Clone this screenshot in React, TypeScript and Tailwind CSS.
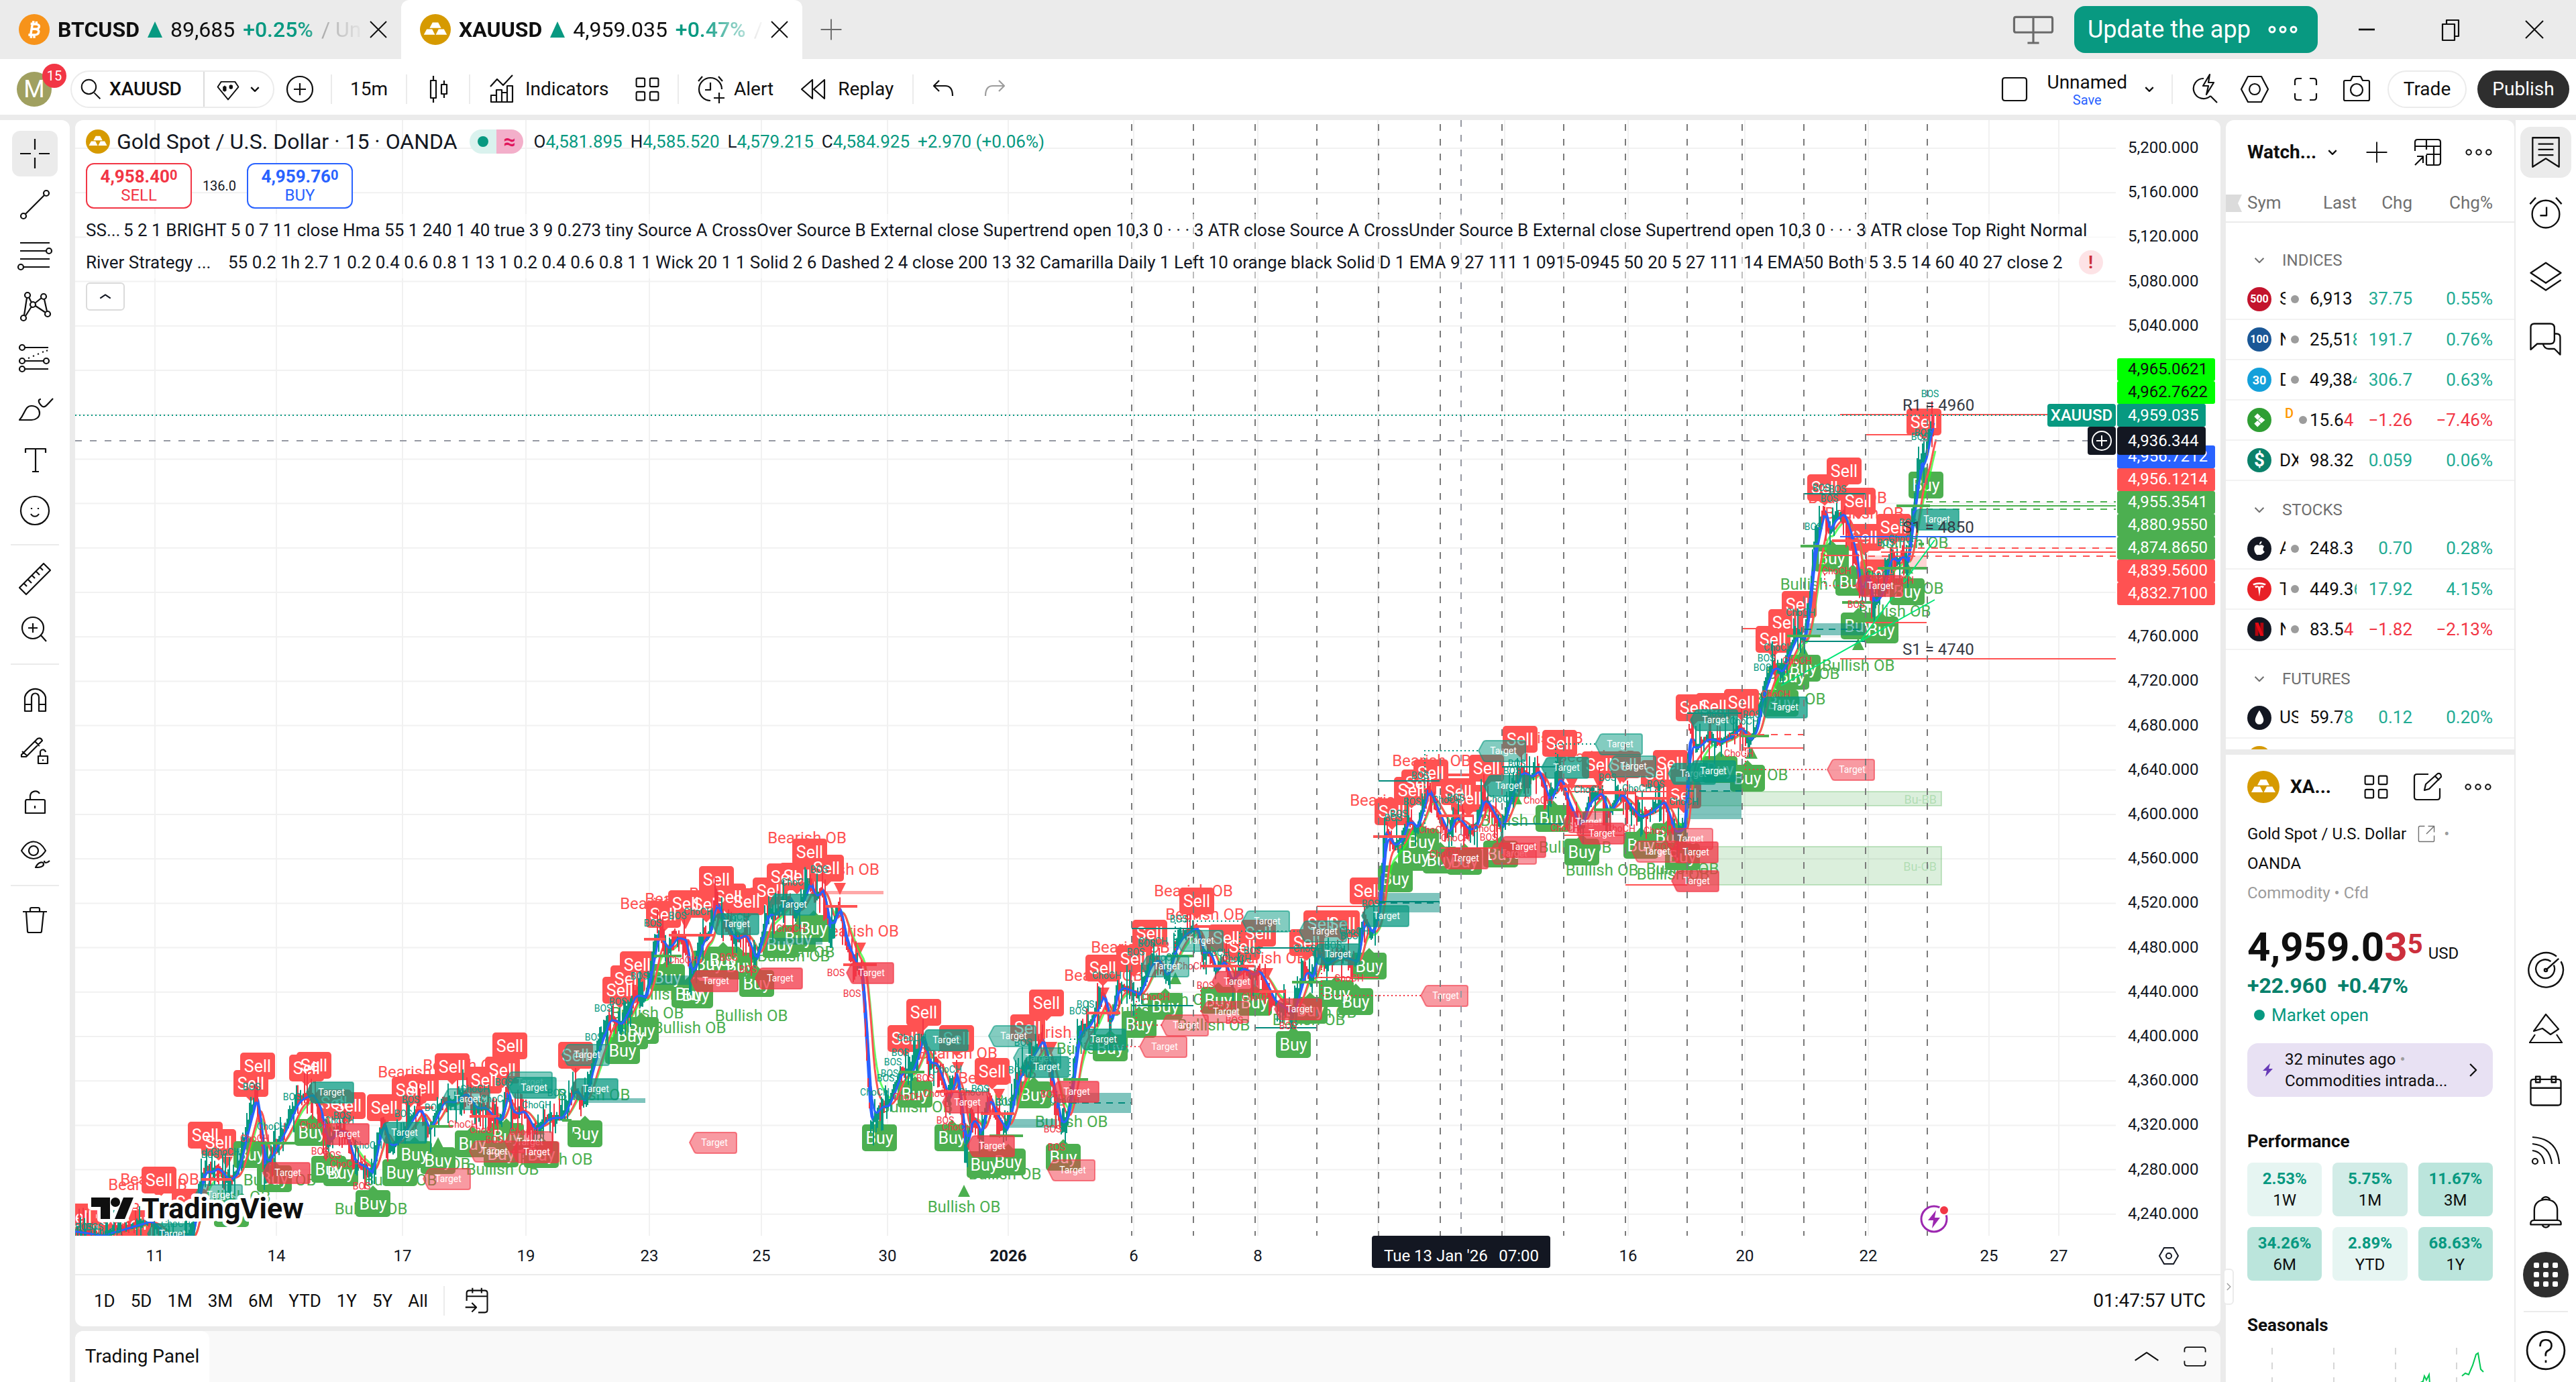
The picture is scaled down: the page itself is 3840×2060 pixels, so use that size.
import { FC, ReactNode } from 'react';

type Point = [number, number];

/* ---------- icons, drawn on a 28 unit grid ---------- */

const paths = {
	cross: 'M14 3v8M14 17v8M3 14h8M17 14h8',
	trend:
		'M7 21L21 7M5.5 20.5a2 2 0 1 0 0 4a2 2 0 1 0 0-4M22.5 3.5a2 2 0 1 0 0 4a2 2 0 1 0 0-4',
	fib: 'M3 4.5h22M3 10.5h19.5M3 16.5h22M5.5 22.5H25M24.5 8.5a2 2 0 1 0 0 4a2 2 0 1 0 0-4M3.5 20.5a2 2 0 1 0 0 4a2 2 0 1 0 0-4',
	pattern:
		'M6 20.5l2-13M7 21l4.500-7M9.500 7l2 4M14 11.500l5-4M14.500 13.500l7.500 5M21 8.500l2 9M5.500 20.500a2 2 0 1 0 0 4a2 2 0 1 0 0-4M8.500 3.500a2 2 0 1 0 0 4a2 2 0 1 0 0-4M12.500 10.500a2 2 0 1 0 0 4a2 2 0 1 0 0-4M20.500 4.500a2 2 0 1 0 0 4a2 2 0 1 0 0-4M23.500 17.500a2 2 0 1 0 0 4a2 2 0 1 0 0-4',
	forecast:
		'M6.500 6.500H24M6.500 16.500h14M6.500 22.500H24M9 14.500l1-.4M12.500 13l1-.4M16 11.500l1-.4M19.500 10l1-.4M22.500 9l1-.4M4.500 4.500a2 2 0 1 0 0 4a2 2 0 1 0 0-4M4.500 14.500a2 2 0 1 0 0 4a2 2 0 1 0 0-4M4.500 20.500a2 2 0 1 0 0 4a2 2 0 1 0 0-4M22.500 14.500a2 2 0 1 0 0 4a2 2 0 1 0 0-4',
	brush:
		'M2.500 22.500h9c3 0 6-2 6-5s-2-5.500-6-5.500c-5 0-4.500 5.500-9 10.500zM18.500 7c-2 0-2.500 2 .5 5c2 2 3.500 0 8.500-5.500',
	text: 'M7 9V6h15v3M14.500 6v17M12 23h5',
	emoji:
		'M14 3.500a10.500 10.500 0 1 0 0 21a10.500 10.500 0 1 0 0-21M11 16.500c1.500 2.500 4.500 2.500 6 0M11.500 12v1M16.500 12v1',
	ruler:
		'M2.500 20.500L20.500 2.500l5 5L7.500 25.500zM6 17.500l2 2M9 14.500l2.500 2.500M12 11.500l2 2M15 8.500l2.500 2.500M18 5.500l2 2',
	zoom: 'M12.500 4.500a8 8 0 1 0 0 16a8 8 0 1 0 0-16M18.500 18l4 4.500M9 12.500h7M12.500 9v7',
	magnet:
		'M6.500 23.500V13a8 8 0 0 1 15.500 0v10.500h-5V13a2.700 2.700 0 0 0-5.500 0v10.500zM6.500 18.500h5M17 18.500h5',
	penLock:
		'M4 18l12-12q2.500-1 3.500 1.500L7.500 19.500H4zM14 8l3.500 3.500M4.500 15.500l4 3.500M16.500 19h7v5.500h-7zM18 19v-2.500a2 2 0 0 1 4-.5M20 21.500v1',
	lock: 'M7.500 13.500h13a1 1 0 0 1 1 1v9h-14.500v-9zM10.500 13.500v-3a3.800 3.800 0 0 1 7-1.500M14 18v2',
	eye: 'M4 13.500c5-9 13-9 18 0c-5 8-13 8-18 0zM13 10a3.500 3.500 0 1 0 0 7a3.500 3.500 0 1 0 0-7M14.500 26c3 0 6-.5 6-2.500s-4-2-6 2.500zM21 21c0 2 2 2 4 0',
	trash: 'M5 8h18M7.500 8l1 14.500q0 1 1 1h8.500q1 0 1-1L20.500 8M10.500 8V6q0-1 1-1h5q1 0 1 1v2',
	search: 'M12 6a6 6 0 1 0 0 12a6 6 0 1 0 0-12M16.500 17l5 5',
	diamond: 'M8 7.500h12l3 4.500-9 11-9-11zM11 11v5M10 12h2v3h-2zM16.500 10v4M15.500 11h2v2h-2z',
	down: 'M9 11.500l5 5 5-5',
	up: 'M5 17l9-6 9 6',
	right: 'M11 7l7 7-7 7',
	plusCircle: 'M14 4.500a9.500 9.500 0 1 0 0 19a9.500 9.500 0 1 0 0-19M14 9.500v9M9.500 14h9',
	plus: 'M14 5v18M5 14h18',
	close: 'M7 7l14 14M21 7L7 21',
	candles: 'M8.500 7.500h4v13h-4zM10.500 4v3.500M10.500 20.500V24M16.500 10.500h4v7h-4zM18.500 7.500v3M18.500 17.500v3',
	indicators:
		'M5.500 23.500v-5h4v5zM9.500 23.500v-9h4v9zM13.500 23.500v-7h4v7zM17.500 23.500v-12h4v12zM5 12l5-5.500 4.500 4.500 7-7.500',
	grid: 'M6.500 5.500h4.500a1 1 0 0 1 1 1v4.500a1 1 0 0 1-1 1H6.500a1 1 0 0 1-1-1V6.500a1 1 0 0 1 1-1zM17 5.500h4.500a1 1 0 0 1 1 1v4.500a1 1 0 0 1-1 1H17a1 1 0 0 1-1-1V6.500a1 1 0 0 1 1-1zM6.500 16h4.500a1 1 0 0 1 1 1v4.500a1 1 0 0 1-1 1H6.500a1 1 0 0 1-1-1V17a1 1 0 0 1 1-1zM17 16h4.500a1 1 0 0 1 1 1v4.500a1 1 0 0 1-1 1H17a1 1 0 0 1-1-1V17a1 1 0 0 1 1-1z',
	alert:
		'M13.500 22.500a8.500 8.500 0 1 1 8.500-8.500M13.500 9v5.500h-4M4.500 8l3-3.500M22.500 8l-3-3.500M20 16.500v8M16 20.500h8',
	replay: 'M13 7v14l-8-7zM22 7v14l-8-7z',
	undo: 'M10.500 7.500l-4 4 4 4M6.500 11.500H15q5.500 0 5.500 7.500',
	redo: 'M17.500 7.500l4 4-4 4M21.500 11.500H13q-5.500 0-5.500 7.500',
	square: 'M7 5.500h14q2 0 2 2v13q0 2-2 2H7q-2 0-2-2v-13q0-2 2-2z',
	quick: 'M14 6a7.500 7.500 0 1 0 5 13M19 19l5 5M18.500 3l-5 8.500h4l-1.500 6.500 5.500-9h-4z',
	hex: 'M9 4.500h10l5 9.500-5 9.500H9L4 14zM14 10a4 4 0 1 0 0 8a4 4 0 1 0 0-8',
	full: 'M6 11V8q0-2 2-2h3M17 6h3q2 0 2 2v3M22 17v3q0 2-2 2h-3M11 22H8q-2 0-2-2v-3',
	camera:
		'M5.500 7.500h4l1.500-3h6l1.500 3h4q1 0 1 1v13q0 1-1 1h-17q-1 0-1-1v-13q0-1 1-1zM14 10a4.500 4.500 0 1 0 0 9a4.500 4.500 0 1 0 0-9',
	table:
		'M4.500 13V6.500q0-2 2-2h15q2 0 2 2v15q0 2-2 2H13M4.500 9.500h19M13 4.500V12M13 16v7.500M18.500 9.500v14M13 15.500h10.500M4.500 23.500l6-6M6 17h4.500v5',
	dots: 'M6 12a2 2 0 1 0 0 4a2 2 0 1 0 0-4M14 12a2 2 0 1 0 0 4a2 2 0 1 0 0-4M22 12a2 2 0 1 0 0 4a2 2 0 1 0 0-4',
	edit: 'M15 4.500H6.500q-2 0-2 2v15q0 2 2 2h15q2 0 2-2V15M12 16.500l1-4.500 9-8q2.500-.5 2.500 2.500l-9 9zM20 6l3 3',
	external: 'M12 5H6.500q-1.500 0-1.500 1.500v15q0 1.500 1.500 1.500h15q1.500 0 1.500-1.500V16M16 5h7v7M23 5l-9 9',
	list: 'M4.500 3.500h19v21L14 18.500l-9.500 6zM8.500 8h11M8.500 12h11M8.500 16h11',
	alarm:
		'M14 5.500a9.500 9.500 0 1 0 0 19a9.500 9.500 0 1 0 0-19M14.500 10v6H10M3 8l4-4.500M25 8l-4-4.500',
	layers: 'M14 5l10.500 7L14 19 3.500 12zM3.500 17L14 24l10.500-7',
	chat: 'M6 3.500h11q3 0 3 3v8q0 3-3 3H8l-4.500 4V6q0-2.500 2.500-2.500zM20 10.500h1.500q2.500 0 2.500 2.500v12l-4-4h-4q-3 0-4-3.500',
	radar:
		'M24.500 8a12 12 0 1 1-3-3.500M19.500 10.500a6.500 6.500 0 1 1-2-2.500M14 14l9-8M14 13a1 1 0 1 0 0 2a1 1 0 1 0 0-2',
	signal: 'M1.500 23.500h25M2 23.500l4-6M26 23.500l-4-6M14 2.500l9.500 11-6 4-6-4.500-6.500 2z',
	calendar: 'M5.500 6.500h17q2 0 2 2v14q0 2-2 2h-17q-2 0-2-2v-14q0-2 2-2zM3.500 12.500h21M7 4.500h3v4H7zM18 4.500h3v4h-3z',
	rss: 'M6 20a2 2 0 1 0 0 4a2 2 0 1 0 0-4M4 14q8 1 9 10M4 9q13 1 14.500 15M4 4q19 1 20 20',
	bell: 'M6 20.500v-7q0-7 8-7.500q8 .5 8 7.500v7M6 20.500h16q3 0 2.500 3h-21q-.5-3 2.500-3zM11 6q3-3.500 6 0M11.500 24q2.500 3 5 0',
	help: 'M14 2.500a11.500 11.500 0 1 0 0 23a11.500 11.500 0 1 0 0-23M10.500 11.500q0-4 3.500-4t3.500 3.500q0 2-2 3t-1.500 3.500M14 20v1.500',
	goto: 'M5 14V8q0-2 2-2h12q2 0 2 2v13q0 2-2 2h-5M5 10.500h16M9.500 4v4M16.500 4v4M4 19h8M9 15.500l3.500 3.500L9 22.500',
	expand: 'M4.500 10V8q0-2.500 2.500-2.500h14q2.500 0 2.500 2.500v2M4.500 18v2q0 2.500 2.500 2.500h14q2.500 0 2.500-2.500v-2',
	layout: 'M5 7.500h18q1 0 1 1v6q0 1-1 1H5q-1 0-1-1v-6q0-1 1-1zM14 7.500v13.500M11 21h6',
	restore: 'M8 10h9v12H8zM11 10V7h9v12h-3',
	minus: 'M7 14h14',
};

const Icon: FC<{ name: keyof typeof paths; className?: string }> = ({
	name,
	className = 'size-14',
}) => (
	<svg
		viewBox="0 0 28 28"
		className={`shrink-0 ${className}`}
		fill="none"
		stroke="currentColor"
		strokeWidth="1.1"
		strokeLinejoin="round"
		aria-hidden="true"
	>
		<path d={paths[name]} />
	</svg>
);

const IconButton: FC<{
	name: keyof typeof paths;
	label: string;
	className?: string;
	icon?: string;
}> = ({ name, label, className = '', icon }) => (
	<button
		type="button"
		aria-label={label}
		className={`flex shrink-0 items-center justify-center ${className}`}
	>
		<Icon name={name} className={icon} />
	</button>
);

const GoldLogo: FC<{ className: string }> = ({ className }) => (
	<svg viewBox="0 0 24 24" className={`shrink-0 ${className}`} aria-hidden="true">
		<circle cx="12" cy="12" r="12" fill="#d69a00" />
		<path
			fill="#fff"
			d="M9.800 6.500h4.400l2.300 4.300h-9zM5.300 11.700h4.200l2.200 4.300H3zM14.500 11.700h4.200L21 16h-8.700z"
		/>
	</svg>
);

/* ---------- chart data ---------- */

const price: Point[] = [
	[112, 1836], [150, 1842], [224, 1820], [245, 1842], [287, 1842], [295, 1776], [306, 1738],
	[314, 1748], [324, 1740], [340, 1762], [353, 1748], [369, 1677], [382, 1628], [388, 1683],
	[394, 1748], [407, 1716], [427, 1677], [444, 1639], [465, 1631], [477, 1655], [487, 1710],
	[502, 1683], [515, 1688], [527, 1735], [544, 1740], [554, 1751], [564, 1694], [571, 1666],
	[581, 1716], [597, 1694], [614, 1666], [625, 1650], [639, 1688], [660, 1639], [676, 1644],
	[693, 1628], [709, 1655], [722, 1650], [734, 1666], [747, 1672], [757, 1617], [763, 1666],
	[780, 1655], [796, 1688], [817, 1666], [838, 1666], [856, 1620], [871, 1647], [883, 1584],
	[908, 1515], [925, 1529], [946, 1480], [962, 1488], [980, 1386], [995, 1419], [1008, 1395],
	[1022, 1403], [1030, 1463], [1049, 1392], [1057, 1397], [1066, 1337], [1078, 1375],
	[1095, 1403], [1111, 1392], [1126, 1436], [1145, 1354], [1153, 1365], [1178, 1337],
	[1186, 1370], [1207, 1310], [1215, 1343], [1226, 1323], [1237, 1392], [1251, 1348],
	[1261, 1408], [1273, 1436], [1285, 1452], [1298, 1684], [1312, 1648], [1324, 1648],
	[1343, 1594], [1359, 1599], [1376, 1539], [1385, 1594], [1395, 1583], [1414, 1643],
	[1426, 1594], [1439, 1720], [1450, 1659], [1462, 1695], [1474, 1627], [1484, 1665],
	[1500, 1687], [1516, 1605], [1532, 1583], [1554, 1547], [1567, 1610], [1582, 1687],
	[1592, 1659], [1608, 1533], [1624, 1528], [1645, 1478], [1655, 1533], [1666, 1467],
	[1682, 1476], [1698, 1484], [1714, 1435], [1726, 1429], [1739, 1462], [1752, 1407],
	[1765, 1391], [1784, 1382], [1793, 1429], [1803, 1418], [1812, 1451], [1824, 1429],
	[1835, 1467], [1851, 1440], [1867, 1456], [1876, 1445], [1899, 1495], [1927, 1511],
	[1946, 1440], [1956, 1462], [1964, 1413], [1975, 1440], [1994, 1424], [2023, 1435],
	[2032, 1363], [2045, 1396], [2055, 1358], [2066, 1226], [2077, 1265], [2090, 1248],
	[2099, 1218], [2112, 1237], [2128, 1171], [2144, 1215], [2159, 1247], [2169, 1213],
	[2189, 1240], [2201, 1230], [2211, 1183], [2225, 1213], [2239, 1237], [2253, 1177],
	[2269, 1147], [2281, 1160], [2293, 1147], [2309, 1200], [2325, 1153], [2337, 1200],
	[2356, 1237], [2368, 1193], [2387, 1180], [2396, 1217], [2416, 1180], [2428, 1203],
	[2444, 1220], [2460, 1210], [2480, 1193], [2496, 1247], [2512, 1230], [2518, 1083],
	[2528, 1117], [2544, 1100], [2564, 1107], [2580, 1097], [2594, 1083], [2608, 1107],
	[2619, 1083], [2627, 1030], [2643, 990], [2656, 1004], [2667, 968], [2679, 943],
	[2690, 954], [2699, 879], [2703, 818], [2719, 754], [2728, 801], [2734, 772], [2748, 765],
	[2761, 811], [2768, 843], [2774, 900], [2783, 847], [2792, 908], [2806, 879], [2818, 822],
	[2828, 840], [2835, 826], [2844, 840], [2850, 772], [2861, 690], [2871, 679], [2877, 636],
	[2884, 619],
];

const sells: Point[] = [
	[117, 1814], [128, 1836], [170, 1817], [199, 1824], [237, 1759], [282, 1792], [306, 1692],
	[326, 1703], [374, 1615], [384, 1589], [457, 1592], [468, 1588], [498, 1644], [519, 1648],
	[573, 1651], [610, 1625], [628, 1621], [674, 1590], [722, 1610], [749, 1595], [760, 1559],
	[858, 1573], [924, 1476], [936, 1459], [950, 1438], [989, 1363], [1022, 1347], [1053, 1348],
	[1068, 1311], [1086, 1337], [1113, 1344], [1148, 1328], [1169, 1307], [1188, 1306],
	[1207, 1270], [1232, 1294], [1349, 1548], [1377, 1509], [1426, 1548], [1479, 1597],
	[1532, 1532], [1560, 1495], [1644, 1443], [1690, 1429], [1714, 1391], [1784, 1343],
	[1828, 1398], [1852, 1411], [1876, 1391], [1948, 1405], [1969, 1377], [2001, 1377],
	[2038, 1328], [2075, 1210], [2104, 1178], [2115, 1167], [2133, 1152], [2174, 1180],
	[2189, 1190], [2216, 1145], [2266, 1102], [2325, 1108], [2384, 1140], [2420, 1140],
	[2472, 1153], [2490, 1138], [2510, 1185], [2524, 1055], [2554, 1053], [2596, 1047],
	[2643, 953], [2662, 928], [2682, 901], [2720, 727], [2749, 702], [2770, 747], [2779, 801],
	[2799, 854], [2823, 786], [2868, 629],
];

const buys: Point[] = [
	[345, 1809], [374, 1721], [409, 1757], [465, 1688], [490, 1743], [508, 1748], [556, 1794],
	[596, 1748], [618, 1721], [653, 1730], [704, 1705], [755, 1694], [747, 1720], [807, 1721],
	[872, 1690], [928, 1566], [940, 1544], [956, 1536], [995, 1457], [1027, 1482], [1037, 1483],
	[1057, 1437], [1078, 1431], [1103, 1440], [1128, 1466], [1163, 1408], [1190, 1399],
	[1213, 1384], [1311, 1696], [1364, 1631], [1419, 1696], [1467, 1736], [1503, 1732],
	[1541, 1632], [1585, 1725], [1655, 1562], [1698, 1527], [1737, 1500], [1816, 1491],
	[1870, 1494], [1928, 1557], [1953, 1506], [1992, 1481], [2021, 1493], [2041, 1440],
	[2080, 1310], [2110, 1278], [2119, 1255], [2147, 1282], [2183, 1284], [2237, 1273],
	[2315, 1220], [2358, 1270], [2446, 1260], [2488, 1247], [2508, 1277], [2564, 1147],
	[2605, 1160], [2655, 1048], [2671, 1008], [2688, 996], [2730, 832], [2762, 868],
	[2770, 933], [2804, 939], [2843, 882], [2871, 723],
];

const bearish: Point[] = [
	[150, 1802], [220, 1766], [238, 1758], [622, 1598], [689, 1588], [983, 1347], [1020, 1340],
	[1086, 1332], [1203, 1249], [1252, 1296], [1281, 1388], [1428, 1570], [1487, 1607],
	[1576, 1539], [1645, 1454], [1685, 1412], [1779, 1328], [1796, 1363], [1889, 1428],
	[2071, 1193], [2134, 1134], [2301, 1100], [2380, 1128], [2754, 742], [2779, 765],
];

const bullish: Point[] = [
	[349, 1784], [417, 1759], [553, 1802], [597, 1759], [647, 1735], [749, 1743], [829, 1728],
	[885, 1632], [965, 1510], [995, 1482], [1028, 1532], [1120, 1514], [1183, 1425],
	[1190, 1419], [1366, 1650], [1437, 1799], [1498, 1750], [1536, 1640], [1597, 1672],
	[1629, 1563], [1710, 1506], [1755, 1490], [1809, 1528], [1951, 1520], [1968, 1509],
	[2261, 1223], [2348, 1263], [2388, 1297], [2494, 1303], [2508, 1295], [2611, 1155],
	[2667, 1042], [2688, 1004], [2708, 871], [2770, 992], [2824, 911], [2843, 877],
	[2850, 809],
];

const bosUp: Point[] = [
	[125, 1829], [141, 1829], [313, 1721], [375, 1620], [435, 1635], [510, 1663], [601, 1660],
	[612, 1639], [646, 1651], [751, 1613], [829, 1629], [885, 1546], [899, 1503], [921, 1493],
	[953, 1455], [973, 1376], [1010, 1365], [1221, 1296], [1320, 1607], [1326, 1600],
	[1331, 1583], [1342, 1569], [1461, 1623], [1497, 1643], [1516, 1595], [1525, 1554],
	[1607, 1507], [1618, 1497], [1693, 1419], [1709, 1406], [1757, 1370], [1867, 1417],
	[1987, 1409], [2011, 1395], [2043, 1347], [2077, 1219], [2085, 1213], [2105, 1195],
	[2117, 1156], [2170, 1189], [2254, 1149], [2261, 1138], [2396, 1159], [2468, 1169],
	[2611, 1065], [2627, 995], [2633, 981], [2703, 785], [2715, 727], [2727, 743], [2739, 729],
	[2811, 809], [2844, 779], [2862, 651], [2867, 645], [2877, 587],
];

const chochUp: Point[] = [
	[160, 1836], [262, 1824], [336, 1717], [405, 1679], [506, 1670], [548, 1707], [708, 1623],
	[738, 1638], [800, 1647], [1041, 1359], [1095, 1367], [1186, 1315], [1304, 1628],
	[1359, 1547], [1412, 1594], [1451, 1628], [1587, 1640], [1650, 1454], [1719, 1403],
	[1735, 1427], [1811, 1420], [1843, 1429], [1950, 1414], [2018, 1388], [2157, 1192],
	[2237, 1191], [2368, 1177], [2440, 1175], [2510, 1195], [2556, 1063], [2600, 1075],
	[2651, 965], [2684, 913], [2802, 857], [2837, 803],
];

const bosDown: Point[] = [
	[477, 1716], [495, 1722], [539, 1768], [737, 1699], [1086, 1427], [1115, 1445],
	[1246, 1450], [1270, 1481], [1379, 1607], [1409, 1670], [1564, 1631], [1569, 1683],
	[1575, 1710], [1797, 1469], [1840, 1521], [1920, 1529], [2219, 1248], [2480, 1263],
	[2767, 901],
];

const chochDown: Point[] = [
	[380, 1697], [469, 1677], [514, 1735], [690, 1676], [722, 1684], [781, 1687], [1018, 1431],
	[1179, 1384], [1353, 1635], [1398, 1630], [1426, 1680], [1554, 1584], [1645, 1551],
	[1722, 1486], [1776, 1440], [1822, 1500], [1873, 1486], [2011, 1458], [2137, 1237],
	[2170, 1249], [2153, 1273], [2217, 1235], [2293, 1193], [2333, 1234], [2416, 1235],
	[2472, 1238], [2592, 1123], [2647, 1035], [2679, 985], [2738, 851], [2831, 865],
];

const targetsUp: Point[] = [
	[257, 1839], [494, 1628], [603, 1688], [796, 1621], [888, 1623], [1098, 1377], [1183, 1348],
	[1410, 1550], [1560, 1590], [1645, 1549], [1994, 1422], [2067, 1365], [2249, 1171],
	[2335, 1144], [2524, 1153], [2554, 1149], [2557, 1073], [2661, 1054], [2887, 774],
];

const targetsUpFaded: Point[] = [
	[328, 1781], [697, 1638], [790, 1613], [875, 1572], [1511, 1544], [1548, 1577],
	[1790, 1402], [1739, 1440], [1889, 1373], [1974, 1388], [2241, 1119], [2415, 1109],
	[2435, 1142],
];

const targetsDown: Point[] = [
	[429, 1748], [517, 1690], [800, 1717], [1067, 1462], [1163, 1458], [1299, 1450],
	[1442, 1643], [1479, 1708], [1605, 1627], [1844, 1463], [1937, 1504], [2185, 1279],
	[2271, 1262], [2388, 1242], [2528, 1270], [2529, 1313], [2803, 873],
];

const targetsDownFaded: Point[] = [
	[668, 1757], [737, 1716], [790, 1702], [1065, 1703], [1599, 1744], [1736, 1560],
	[1768, 1528], [1828, 1508], [2155, 1484], [2257, 1272], [2368, 1225], [2470, 1269],
	[2520, 1250], [2761, 1147],
];

// [x1, x2, y]
const greenLevels = [
	[380, 440, 1704], [640, 675, 1679], [838, 852, 1670], [975, 1016, 1425], [1340, 1378, 1598],
	[1475, 1525, 1693], [1585, 1622, 1609], [1740, 1780, 1425], [1926, 1998, 1464],
	[2376, 2420, 1207], [2595, 2637, 1097], [2684, 2734, 814], [2746, 2790, 898],
	[2664, 2714, 948], [2799, 2872, 847], [2827, 2877, 754], [2860, 2868, 811],
];

const redLevels = [
	[300, 345, 1758], [620, 646, 1651], [700, 740, 1664], [960, 992, 1400], [997, 1066, 1394],
	[1230, 1278, 1351], [1257, 1307, 1438], [1395, 1450, 1627], [1462, 1512, 1660],
	[1620, 1670, 1510], [1790, 1870, 1440], [1780, 1816, 1381], [1870, 1916, 1478],
	[2047, 2096, 1247], [2145, 2196, 1216], [2155, 2200, 1155], [2330, 2390, 1172],
	[2390, 2438, 1182], [2440, 2490, 1190], [2731, 2780, 806],
];

const tealLines = [
	[1687, 1779, 1384], [1687, 1779, 1499], [1871, 1963, 1532], [1871, 1963, 1413],
	[2055, 2146, 1164], [2055, 2146, 1344], [2239, 2331, 1143], [2239, 2331, 1228],
	[2515, 2596, 1063], [2690, 2780, 736], [2690, 2780, 956],
];

const redLines = [
	[1963, 2055, 1351], [1963, 2055, 1457], [2147, 2239, 1264], [2331, 2423, 1245],
	[2331, 2515, 1180], [2423, 2515, 1319], [2597, 2689, 1115], [2597, 2650, 937],
	[2719, 2772, 828], [2781, 2872, 928], [2781, 2850, 648], [2743, 3154, 618],
	[2743, 3154, 982], [2804, 3154, 823],
];

const tealZones = [
	[871, 1637, 91, 7], [966, 1454, 62, 14], [1143, 1398, 83, 10], [1503, 1668, 73, 13],
	[1595, 1629, 91, 30], [2055, 1331, 91, 29], [2515, 1155, 81, 66], [2690, 929, 90, 18],
];

// entry price to target flag: x start, y start, y target, x flag
const routes = [
	[1752, 1425, 1373, 1850], [1848, 1440, 1388, 1935], [2124, 1240, 1119, 2205],
	[2319, 1190, 1109, 2380], [1595, 1627, 1549, 1610],
];
const routesDown = [
	[1970, 1420, 1484, 2118], [2602, 1110, 1147, 2722], [1694, 1480, 1528, 1732],
	[1790, 1470, 1508, 1792], [1655, 1500, 1560, 1698], [2720, 820, 873, 2768],
];

const arrowsUp: Point[] = [
	[404, 1726], [653, 1704], [803, 1682], [1119, 1450], [1437, 1775], [1752, 1458], [1928, 1534],
	[2260, 1190], [2444, 1243], [2611, 1122], [2688, 970], [2770, 960], [2843, 846], [855, 1695],
];
const arrowsDown: Point[] = [
	[338, 1733], [1022, 1376], [1252, 1325], [1282, 1414], [1428, 1592], [1489, 1632],
	[1567, 1562], [1645, 1481], [1889, 1452], [2343, 1169], [2384, 1168], [2415, 1160],
];

const days = [
	1687, 1779, 1871, 1963, 2055, 2147, 2239, 2331, 2423, 2515, 2597, 2689, 2781, 2873,
];

const dates: [number, string][] = [
	[231, '11'], [412, '14'], [600, '17'], [784, '19'], [968, '23'], [1135, '25'],
	[1323, '30'], [1503, '2026'], [1690, '6'], [1875, '8'], [2054, ''], [2243, ''],
	[2427, '16'], [2601, '20'], [2785, '22'], [2965, '25'], [3069, '27'],
];

const tags = [
	{ y: 534, text: '4,965.0621', fill: '#00ff00', color: '#0f0f0f' },
	{ y: 568, text: '4,962.7622', fill: '#00ff00', color: '#0f0f0f' },
	{ y: 664, text: '4,956.7212', fill: '#2962ff', color: '#fff' },
	{ y: 698, text: '4,956.1214', fill: '#ff5252', color: '#fff' },
	{ y: 732, text: '4,955.3541', fill: '#4caf50', color: '#fff' },
	{ y: 766, text: '4,880.9550', fill: '#4caf50', color: '#fff' },
	{ y: 800, text: '4,874.8650', fill: '#4caf50', color: '#fff' },
	{ y: 834, text: '4,839.5600', fill: '#ff5252', color: '#fff' },
	{ y: 868, text: '4,832.7100', fill: '#ff5252', color: '#fff' },
];

/* ---------- chart ---------- */

const noise = (n: number) => {
	const v = Math.sin(n * 12.9898) * 43758.5453;
	return v - Math.floor(v);
};

// one sample every two units along the price points
const samples: Point[] = [];
for (let i = 1, x = price[0][0]; i < price.length; i++) {
	const [x0, y0] = price[i - 1];
	const [x1, y1] = price[i];
	for (; x < x1; x += 2) {
		samples.push([x, y0 + ((y1 - y0) * (x - x0)) / (x1 - x0)]);
	}
}

const average = (length: number, shift: number) => {
	let value = samples[0][1];
	return samples
		.map(([x, y], i) => {
			value += (y - value) / length;
			return `${i ? 'L' : 'M'}${x + shift} ${value.toFixed(1)}`;
		})
		.join('');
};

const candles = (rising: boolean) =>
	samples
		.map(([x, y], i) => {
			const next = samples[Math.min(i + 3, samples.length - 1)][1];
			const up = next - y + (noise(i) - 0.5) * 30 < 0;
			if (up !== rising) return '';
			const top = y - 4 - noise(i + 7) ** 3 * 34;
			const bottom = y + 4 + noise(i + 31) ** 3 * 34;
			return `M${x} ${top.toFixed(1)}V${bottom.toFixed(1)}`;
		})
		.join('');

const levels = (rows: number[][]) =>
	rows.map(([x1, x2, y]) => `M${x1} ${y}H${x2}`).join('');

// all boxes first, so that the captions of crowded signals stay on top
const Signals: FC<{ points: Point[]; kind: 'Sell' | 'Buy' }> = ({ points, kind }) => (
	<g fill={kind === 'Sell' ? '#ff5252' : '#4caf50'}>
		{points.map(([x, y], i) => (
			<rect key={i} x={x - 26} y={y - 20} width="52" height="40" rx="5" />
		))}
		<path
			d={points
				.map(([x, y]) =>
					kind === 'Sell' ? `M${x - 8} ${y + 19}l8 8 8-8z` : `M${x - 8} ${y - 19}l8-8 8 8z`
				)
				.join('')}
		/>
		<g fill="#fff" fontSize="25" textAnchor="middle">
			{points.map(([x, y], i) => (
				<text key={i} x={x} y={y + 9}>
					{kind}
				</text>
			))}
		</g>
	</g>
);

const Target: FC<{ at: Point; color: string; opacity: number }> = ({
	at: [x, y],
	color,
	opacity,
}) => (
	<g>
		<path
			d={`M${x - 37} ${y}l7-13q1-2 4-2h56q3 0 3 3v25q0 3-3 3h-56q-3 0-4-2z`}
			fill={color}
			fillOpacity={opacity}
			stroke={color}
			strokeOpacity="0.6"
			strokeWidth="2"
		/>
		<text x={x} y={y + 5} fill="#fff" fontSize="14" textAnchor="middle">
			Target
		</text>
	</g>
);

const Marks: FC<{ points: Point[]; text: string; color: string; size: number }> = ({
	points,
	text,
	color,
	size,
}) => (
	<g fill={color} fontSize={size} textAnchor="middle">
		{points.map(([x, y], i) => (
			<text key={i} x={x} y={y + Math.round(size / 3)}>
				{text}
			</text>
		))}
	</g>
);

const Chart = () => (
	<svg viewBox="112 179 3198 1720" className="block h-auto w-full" role="img" aria-label="XAUUSD 15 minute chart">
		<clipPath id="plot">
			<rect x="112" y="179" width="3042" height="1663" />
		</clipPath>
		<g clipPath="url(#plot)">
			<g stroke="#f1f1f1" strokeWidth="2">
				{Array.from({ length: 25 }, (_, i) => (
					<path key={i} d={`M112 ${221 + i * 66.2}H3154`} />
				))}
				{dates.map(([x]) => (
					<path key={x} d={`M${x} 179V1842`} />
				))}
			</g>

			<g fill="#4caf50" fillOpacity="0.2" stroke="#4caf50" strokeOpacity="0.3" strokeWidth="2">
				<rect x="2515" y="1180" width="379" height="21" />
				<rect x="2515" y="1262" width="379" height="57" />
			</g>
			<g fill="#4caf50" fillOpacity="0.3" fontSize="18" textAnchor="end">
				<text x="2887" y="1198">Bu-BB</text>
				<text x="2887" y="1298">Bu-OB</text>
			</g>
			<rect x="1231" y="1328" width="86" height="5" fill="#ff5252" fillOpacity="0.5" />
			<rect x="2781" y="828" width="91" height="19" fill="#ff5252" fillOpacity="0.25" />

			<Marks points={bearish} text="Bearish OB" color="#ff5252" size={24} />
			<Marks points={bullish} text="Bullish OB" color="#4caf50" size={24} />
			<Signals points={sells} kind="Sell" />
			<Signals points={buys} kind="Buy" />
			<path
				fill="#4caf50"
				d={arrowsUp.map(([x, y]) => `M${x - 9} ${y + 9}l9-18 9 18z`).join('')}
			/>
			<path
				fill="#ff5252"
				d={arrowsDown.map(([x, y]) => `M${x - 9} ${y - 9}l9 18 9-18z`).join('')}
			/>
			{tealZones.map(([x, y, w, h]) => (
				<rect key={x} x={x} y={y} width={w} height={h} fill="#00897b" fillOpacity="0.5" />
			))}

			<g fill="none">
				<path d={average(7, 3)} stroke="#22ff22" strokeOpacity="0.7" strokeWidth="3" />
				<path d={average(5, 4)} stroke="#ff5252" strokeWidth="3" />
				<path d={average(2, 0)} stroke="#2962ff" strokeWidth="5" strokeLinejoin="round" />
				<path d={candles(true)} stroke="#089981" strokeWidth="2" />
				<path d={candles(false)} stroke="#f23645" strokeWidth="2" />
				<path d={average(3, 0)} stroke="#2962ff" strokeWidth="3" strokeLinejoin="round" />
				<path d={levels(greenLevels)} stroke="#4caf50" strokeWidth="4" />
				<path d={levels(redLevels)} stroke="#ff5252" strokeWidth="4" />
				<path d={levels(tealLines)} stroke="#00897b" strokeWidth="2" />
				<path d={levels(redLines)} stroke="#ff5252" strokeWidth="2" />
				<path d="M1595 1644h91M2055 1346h91M2515 1179h81M2690 938h90" stroke="#00897b" strokeWidth="2" strokeDasharray="10 8" />
				<path
					d={routes.map(([x, y, t, x2]) => `M${x} ${y}V${t}H${x2}`).join('')}
					stroke="#089981"
					strokeWidth="2"
					strokeDasharray="2 4"
				/>
				<path
					d={routesDown.map(([x, y, t, x2]) => `M${x} ${y}V${t}H${x2}`).join('')}
					stroke="#f23645"
					strokeWidth="2"
					strokeDasharray="2 4"
				/>
				<path d="M2877 754H3154" stroke="#4caf50" strokeWidth="2" />
				<path d="M2871 748H3154M2871 759H3154" stroke="#4caf50" strokeWidth="2" strokeDasharray="10 10" />
				<path d="M2799 817H3154M2785 829H3154M2580 1095h110" stroke="#ff5252" strokeWidth="2" strokeDasharray="10 10" />
				<path d="M2743 800H3154" stroke="#2962ff" strokeWidth="2" />
				<path d="M2655 1022L2884 894M2773 956L2884 805" stroke="#00e676" strokeWidth="2" />
			</g>

			<Marks points={bosUp} text="BOS" color="#089981" size={14} />
			<Marks points={chochUp} text="ChoCH" color="#089981" size={14} />
			<Marks points={bosDown} text="BOS" color="#f23645" size={14} />
			<Marks points={chochDown} text="ChoCH" color="#f23645" size={14} />
			{targetsUpFaded.map((at, i) => (
				<Target key={i} at={at} color="#089981" opacity={0.5} />
			))}
			{targetsDownFaded.map((at, i) => (
				<Target key={i} at={at} color="#f23645" opacity={0.5} />
			))}
			{targetsUp.map((at, i) => (
				<Target key={i} at={at} color="#089981" opacity={0.75} />
			))}
			{targetsDown.map((at, i) => (
				<Target key={i} at={at} color="#f23645" opacity={0.75} />
			))}

			<g stroke="#7a7a7a" strokeWidth="2" strokeDasharray="10 12">
				{days.map((x) => (
					<path key={x} d={`M${x} 185V1842`} />
				))}
			</g>
			<path d="M2178 179V1842M112 657H3112" stroke="#9598a1" strokeWidth="2" strokeDasharray="10 12" />
			<path d="M112 619H3154" stroke="#089981" strokeWidth="2" strokeDasharray="2 4" />

			<g fill="#363a45" fontSize="24">
				<text x="2836" y="612">R1 = 4960</text>
				<text x="2836" y="794">S1 = 4850</text>
				<text x="2836" y="976">S1 = 4740</text>
			</g>

			<g stroke="#fff" strokeWidth="10" strokeLinejoin="round" paintOrder="stroke" fill="#0f0f0f">
				<path d="M136 1785h28v32h-14v-18h-14zM172 1785a7 7 0 1 1 0 14.100a7 7 0 1 1 0-14.100M184 1785h15l-13 32h-15z" />
				<text x="211" y="1816" fontSize="43" fontWeight="700">
					TradingView
				</text>
			</g>

			<circle cx="2883" cy="1817" r="19" fill="#fff" stroke="#9c27b0" strokeWidth="3" />
			<path d="M2886 1804l-12 15h8l-2 12 12-16h-8z" fill="#9c27b0" />
			<circle cx="2898" cy="1804" r="7" fill="#f23645" stroke="#fff" strokeWidth="2" />
		</g>

		{/* price scale */}
		<g fill="#131722" fontSize="24">
			{Array.from({ length: 25 }, (_, i) => 5200 - i * 40)
				.filter((v) => v > 5000 || v < 4800)
				.map((v) => (
					<text key={v} x="3172" y={228 + ((5200 - v) / 40) * 66.2}>
						{`${v.toLocaleString('en-US')}.000`}
					</text>
				))}
		</g>
		{tags.map((t) => (
			<g key={t.y}>
				<rect x="3156" y={t.y} width="146" height="34" rx="3" fill={t.fill} />
				<text x="3172" y={t.y + 24} fontSize="24" fill={t.color}>
					{t.text}
				</text>
			</g>
		))}
		<rect x="3052" y="602" width="102" height="34" rx="4" fill="#089981" />
		<rect x="3156" y="602" width="132" height="34" rx="3" fill="#089981" />
		<rect x="3112" y="636" width="42" height="42" rx="4" fill="#131722" />
		<rect x="3156" y="636" width="132" height="42" rx="4" fill="#131722" />
		<g fill="#fff" fontSize="24">
			<text x="3103" y="627" fontWeight="500" textAnchor="middle">
				XAUUSD
			</text>
			<text x="3172" y="627">4,959.035</text>
			<text x="3172" y="665">4,936.344</text>
		</g>
		<path
			d="M3133 643a14 14 0 1 0 0 28a14 14 0 1 0 0-28M3133 649v16M3125 657h16"
			fill="none"
			stroke="#fff"
			strokeWidth="2"
		/>

		{/* time scale */}
		<g fill="#131722" fontSize="24" textAnchor="middle">
			{dates.map(([x, label]) => (
				<text key={x} x={x} y="1880" fontWeight={label === '2026' ? 700 : 400}>
					{label}
				</text>
			))}
		</g>
		<rect x="2045" y="1842" width="266" height="48" rx="4" fill="#131722" />
		<text x="2063" y="1880" fontSize="24" fill="#fff">
			Tue 13 Jan '26
		</text>
		<text x="2294" y="1880" fontSize="24" fill="#fff" textAnchor="end">
			07:00
		</text>
		<path
			d="M3226 1860h14l7 12-7 12h-14l-7-12zM3233 1868a4 4 0 1 0 0 8a4 4 0 1 0 0-8"
			fill="none"
			stroke="#131722"
			strokeWidth="2"
		/>
	</svg>
);

const Quote: FC<{ label: string; value: string }> = ({ label, value }) => (
	<span className="mr-3">
		{label}
		<span className="text-[#089981]">{value}</span>
	</span>
);

const Legend = () => (
	<div className="absolute top-0 right-[156px] left-4 text-[26px] whitespace-nowrap text-[#131722]">
		<div className="flex h-16 items-center">
			<GoldLogo className="mr-2.5 size-9" />
			<h1 className="text-[32px]">Gold Spot / U.S. Dollar · 15 · OANDA</h1>
			<span className="mr-4 ml-[18px] flex h-9 w-20 overflow-hidden rounded-full">
				<span className="flex w-1/2 items-center justify-center bg-[#daf2ee]">
					<span className="size-4 rounded-full bg-[#089981]" />
				</span>
				<span className="flex w-1/2 items-center justify-center bg-[#f3afca] text-[32px] font-bold text-[#e0155c]">
					≈
				</span>
			</span>
			<Quote label="O" value="4,581.895" />
			<Quote label="H" value="4,585.520" />
			<Quote label="L" value="4,579.215" />
			<Quote label="C" value="4,584.925" />
			<span className="text-[#089981]">+2.970 (+0.06%)</span>
		</div>
		<div className="flex h-[68px] items-center">
			<button
				type="button"
				className="flex h-[68px] w-[158px] flex-col items-center justify-center rounded-xl border-2 border-[#f23645] bg-white leading-7 text-[#f23645]"
			>
				<span className="font-bold">
					4,958.40<sup className="top-[-4px] text-[20px]">0</sup>
				</span>
				<span className="text-[24px]">SELL</span>
			</button>
			<span className="w-[82px] text-center text-[20px]">136.0</span>
			<button
				type="button"
				className="flex h-[68px] w-[158px] flex-col items-center justify-center rounded-xl border-2 border-[#2962ff] bg-white leading-7 text-[#2962ff]"
			>
				<span className="font-bold">
					4,959.76<sup className="top-[-4px] text-[20px]">0</sup>
				</span>
				<span className="text-[24px]">BUY</span>
			</button>
		</div>
		<div className="mt-2 flex h-12 items-center bg-white/50">
			<span className="w-[56px]">SS...</span>
			<span>
				5 2 1 BRIGHT 5 0 7 11 close Hma 55 1 240 1 40 true 3 9 0.273 tiny Source A
				CrossOver Source B External close Supertrend open 10,3 0 · · · 3 ATR close Source A
				CrossUnder Source B External close Supertrend open 10,3 0 · · · 3 ATR close Top Right
				Normal
			</span>
		</div>
		<div className="flex h-12 items-center bg-white/50">
			<span className="w-[212px]">River Strategy ...</span>
			<span>
				55 0.2 1h 2.7 1 0.2 0.4 0.6 0.8 1 13 1 0.2 0.4 0.6 0.8 1 1 Wick 20 1 1 Solid 2 6
				Dashed 2 4 close 200 13 32 Camarilla Daily 1 Left 10 orange black Solid D 1 EMA 9 27
				111 1 0915-0945 50 20 5 27 111 14 EMA50 Both 5 3.5 14 60 40 27 close 2
			</span>
			<span className="ml-6 flex size-9 items-center justify-center rounded-full bg-[#fde3e6] font-bold text-[#cc2f3c]">
				!
			</span>
		</div>
		<button
			type="button"
			aria-label="Collapse indicator legend"
			className="mt-1.5 flex h-[42px] w-[58px] items-center justify-center rounded-md border-2 border-[#dbdbdb] bg-white"
		>
			<Icon name="up" className="size-6 [stroke-width:2.4]" />
		</button>
	</div>
);

/* ---------- top bars ---------- */

const Tab: FC<{
	logo: ReactNode;
	symbol: string;
	last: string;
	change: string;
	rest: string;
	active?: boolean;
}> = ({ logo, symbol, last, change, rest, active }) => (
	<div
		className={`flex h-full w-[598px] items-center gap-3 pr-4 pl-7 text-[32px] whitespace-nowrap ${active ? 'rounded-t-xl bg-white' : ''}`}
	>
		{logo}
		<span className="flex min-w-0 flex-1 items-center gap-3 overflow-hidden [mask-image:linear-gradient(to_right,black_78%,transparent)]">
			<span className="font-bold">{symbol}</span>
			<svg viewBox="0 0 22 24" className="h-6 w-[22px] shrink-0 fill-[#089981]" aria-hidden="true">
				<path d="M11 0l11 24H0z" />
			</svg>
			<span>{last}</span>
			<span className="font-medium text-[#089981]">{change}</span>
			<span className="text-[#8a8a8a]">{rest}</span>
		</span>
		<IconButton name="close" label="Close tab" icon="size-12" className="-ml-3 w-9" />
	</div>
);

const TabBar = () => (
	<header className="flex h-[88px] shrink-0 items-center bg-[#ebebeb]">
		<Tab
			logo={
				<span className="flex size-[46px] shrink-0 items-center justify-center rounded-full bg-[#f7931a]">
					<svg viewBox="0 0 24 24" className="size-8 fill-none stroke-white stroke-[2.6]" aria-hidden="true">
						<path d="M8 5.500l6 .5q4 .5 3.500 3t-4 2.500q4 .5 3.500 3.500t-5 3H5.500M10 6L8 18M9 11.500h5M11 2.500V6M14.500 3v3M8.500 18v3.500M12 18v3.500" />
					</svg>
				</span>
			}
			symbol="BTCUSD"
			last="89,685"
			change="+0.25%"
			rest="/ Un"
		/>
		<Tab
			logo={<GoldLogo className="size-[46px]" />}
			symbol="XAUUSD"
			last="4,959.035"
			change="+0.47%"
			rest="/"
			active
		/>
		<IconButton name="plus" label="New tab" icon="size-12" className="w-[86px] text-[#6a6a6a]" />
		<div className="ml-auto flex items-center">
			<IconButton name="layout" label="Screens" icon="size-20" className="w-[122px] text-[#6a6a6a]" />
			<button
				type="button"
				className="mr-2.5 flex h-[70px] w-[363px] items-center justify-between rounded-2xl bg-[#089981] pr-6 pl-5 text-[36px] text-white"
			>
				Update the app
				<Icon name="dots" className="size-14 [stroke-width:1.5]" />
			</button>
			<IconButton name="minus" label="Minimize" icon="size-12 [stroke-width:1.6]" className="w-[125px]" />
			<IconButton name="restore" label="Restore" icon="size-14" className="w-[125px]" />
			<IconButton name="close" label="Close" icon="size-[52px]" className="w-[125px]" />
		</div>
	</header>
);

const Rule = () => <span className="h-11 w-0.5 shrink-0 bg-[#ebebeb]" />;

const Toolbar = () => (
	<div className="flex h-[83px] shrink-0 items-center bg-white pt-1.5 pr-[10px] pl-[25px] text-[28px]">
		<div className="relative mr-7 flex size-[52px] items-center justify-center rounded-full bg-[#a0a060] text-[36px] text-white">
			M
			<span className="absolute -top-3 left-[38px] flex size-9 items-center justify-center rounded-full bg-[#f23645] text-[20px]">
				15
			</span>
		</div>
		<div className="flex h-14 w-[304px] items-center rounded-full border-2 border-[#ebebeb]">
			<button type="button" className="flex h-full w-[198px] items-center border-r-2 border-[#dbdbdb] pl-1 font-medium">
				<Icon name="search" className="mr-0.5 size-[50px]" />
				XAUUSD
			</button>
			<button type="button" aria-label="Market" className="flex flex-1 items-center justify-center">
				<Icon name="diamond" className="size-12" />
				<Icon name="down" className="size-8 [stroke-width:2]" />
			</button>
		</div>
		<IconButton name="plusCircle" label="Compare" className="-ml-1 mr-1 w-[84px]" />
		<Rule />
		<button type="button" className="w-[110px]">15m</button>
		<Rule />
		<IconButton name="candles" label="Candles" className="w-[92px]" />
		<Rule />
		<button type="button" className="flex w-[218px] items-center pl-5">
			<Icon name="indicators" className="mr-1.5 size-14" />
			Indicators
		</button>
		<IconButton name="grid" label="Templates" icon="size-[54px]" className="w-[91px]" />
		<Rule />
		<button type="button" className="ml-5 flex items-center">
			<Icon name="alert" className="mr-1.5 size-14" />
			Alert
		</button>
		<button type="button" className="ml-8 flex items-center">
			<Icon name="replay" className="mr-2 size-14" />
			Replay
		</button>
		<span className="w-7" />
		<Rule />
		<IconButton name="undo" label="Undo" className="w-[90px]" />
		<IconButton name="redo" label="Redo" className="w-[60px] text-[#9c9c9c]" />

		<div className="ml-auto flex items-center">
			<IconButton name="square" label="Layout" className="w-16" />
			<button type="button" className="ml-4 flex flex-col items-center leading-8">
				Unnamed
				<span className="text-[20px] leading-5 text-[#2962ff]">Save</span>
			</button>
			<IconButton name="down" label="Manage layouts" icon="size-8 [stroke-width:2]" className="w-[66px]" />
			<Rule />
			<IconButton name="quick" label="Quick search" className="ml-2 w-[76px]" />
			<IconButton name="hex" label="Settings" className="w-[76px]" />
			<IconButton name="full" label="Fullscreen" className="w-[76px]" />
			<IconButton name="camera" label="Snapshot" className="w-[76px]" />
			<button type="button" className="ml-2 h-14 w-[118px] rounded-full border-2 border-[#ebebeb]">
				Trade
			</button>
			<button type="button" className="ml-4 h-14 w-[137px] rounded-full bg-[#2e2e2e] text-white">
				Publish
			</button>
		</div>
	</div>
);

/* ---------- side bars ---------- */

const tools: (keyof typeof paths)[][] = [
	['cross', 'trend', 'fib', 'pattern', 'forecast', 'brush', 'text', 'emoji'],
	['ruler', 'zoom'],
	['magnet', 'penLock', 'lock', 'eye'],
	['trash'],
];

const DrawingBar = () => (
	<nav aria-label="Drawing tools" className="flex w-[104px] shrink-0 flex-col items-center rounded-tr-xl bg-white pt-3">
		{tools.map((group, i) => (
			<div key={i} className="flex flex-col items-center">
				{i > 0 && <span className="my-3 h-0.5 w-[72px] bg-[#ebebeb]" />}
				{group.map((name) => (
					<button
						key={name}
						type="button"
						aria-label={name}
						className="flex h-[76px] items-center justify-center"
					>
						<span
							className={`flex h-[68px] w-[68px] items-center justify-center rounded-xl ${name === 'cross' ? 'bg-[#ebebeb]' : ''}`}
						>
							<Icon name={name} />
						</span>
					</button>
				))}
			</div>
		))}
	</nav>
);

const RightRail = () => (
	<nav aria-label="Widgets" className="flex w-[92px] shrink-0 flex-col items-center border-l-2 border-[#ebebeb] bg-white pt-[10px]">
		<IconButton name="list" label="Watchlist" className="size-[76px] rounded-2xl bg-[#ebebeb]" icon="size-[58px]" />
		<IconButton name="alarm" label="Alerts" className="h-[104px]" icon="size-[60px]" />
		<IconButton name="layers" label="Data window" className="h-[84px]" icon="size-[60px]" />
		<IconButton name="chat" label="Chats" className="h-[104px]" icon="size-[60px]" />
		<div className="mt-auto flex flex-col items-center">
			<IconButton name="radar" label="Screener" className="h-[88px]" icon="size-[60px]" />
			<IconButton name="signal" label="Ideas" className="h-[90px]" icon="size-[56px]" />
			<IconButton name="calendar" label="Calendar" className="h-[90px]" icon="size-[60px]" />
			<IconButton name="rss" label="News" className="h-[90px]" icon="size-[56px]" />
			<IconButton name="bell" label="Notifications" className="h-[90px]" icon="size-[60px]" />
			<button
				type="button"
				aria-label="Products"
				className="mt-4 grid size-[68px] grid-cols-[8px_8px_8px] place-content-center gap-1.5 rounded-full bg-[#2e2e2e]"
			>
				{Array.from({ length: 9 }, (_, i) => (
					<span key={i} className="size-2 rounded-xs bg-white" />
				))}
			</button>
			<span className="mt-5 h-0.5 w-[66px] bg-[#ebebeb]" />
			<IconButton name="help" label="Help" className="mt-2.5 h-[94px]" icon="size-[68px]" />
		</div>
	</nav>
);

interface Row {
	logo: ReactNode;
	symbol: string;
	dot?: boolean;
	delayed?: boolean;
	last: string;
	tick: string;
	change: string;
	percent: string;
}

const Badge: FC<{ className: string; children: ReactNode }> = ({ className, children }) => (
	<span
		className={`flex size-9 shrink-0 items-center justify-center rounded-full font-bold text-white ${className}`}
	>
		{children}
	</span>
);

const groups: { title: string; rows: Row[] }[] = [
	{
		title: 'INDICES',
		rows: [
			{ logo: <Badge className="bg-[#c3142d] text-[16px]">500</Badge>, symbol: 'SPX', dot: true, last: '6,913', tick: '', change: '37.75', percent: '0.55%' },
			{ logo: <Badge className="bg-[#1a5796] text-[16px]">100</Badge>, symbol: 'NDX', dot: true, last: '25,51', tick: '8', change: '191.7', percent: '0.76%' },
			{ logo: <Badge className="bg-[#14a0da] text-[18px]">30</Badge>, symbol: 'DJI', dot: true, last: '49,38', tick: '4', change: '306.7', percent: '0.63%' },
			{
				logo: (
					<Badge className="bg-[#2f9e33]">
						<svg viewBox="0 0 20 20" className="size-7 fill-white" aria-hidden="true">
							<path d="M8 3l3.500 3.500L8 10 4.500 6.500zM12 7l4 3-4 3.500L8.500 10zM8 10.500l3.500 3.500L8 17.500 4.500 14z" />
						</svg>
					</Badge>
				),
				symbol: '', delayed: true, dot: true, last: '15.6', tick: '4', change: '−1.26', percent: '−7.46%',
			},
			{ logo: <Badge className="bg-[#0a816a] text-[28px]">$</Badge>, symbol: 'DXY', last: '98.32', tick: '', change: '0.059', percent: '0.06%' },
		],
	},
	{
		title: 'STOCKS',
		rows: [
			{
				logo: (
					<Badge className="bg-[#131722]">
						<svg viewBox="0 0 20 20" className="size-7 fill-white" aria-hidden="true">
							<path d="M10 6.500C7 5 4.500 6.500 4.500 10S7 17 8.500 16.500t3 0S16 14 15.500 13q-3-1.500-.5-5.500Q13 5 10 6.500zM10 5.500q0-3 2.500-3.500 0 3-2.500 3.500z" />
						</svg>
					</Badge>
				),
				symbol: 'AAPL', dot: true, last: '248.3', tick: '', change: '0.70', percent: '0.28%',
			},
			{
				logo: (
					<Badge className="bg-[#e82127]">
						<svg viewBox="0 0 20 20" className="size-7 fill-white" aria-hidden="true">
							<path d="M3 4.500q7-3 14 0l-1 1.500q-6-2-12 0zM5 7q3-1.500 5 .5 2-2 5-.5l-1 2-2.500-1L10 18 8.500 8 6 9z" />
						</svg>
					</Badge>
				),
				symbol: 'TSLA', dot: true, last: '449.3', tick: '6', change: '17.92', percent: '4.15%',
			},
			{
				logo: (
					<Badge className="bg-[#131722]">
						<svg viewBox="0 0 20 20" className="size-7" aria-hidden="true">
							<path fill="#b1060f" d="M5.500 3H9v14H5.500zM11 3h3.500v14H11z" />
							<path fill="#e50914" d="M5.500 3H9l5.500 14H11z" />
						</svg>
					</Badge>
				),
				symbol: 'NFLX', dot: true, last: '83.5', tick: '4', change: '−1.82', percent: '−2.13%',
			},
		],
	},
	{
		title: 'FUTURES',
		rows: [
			{
				logo: (
					<Badge className="bg-[#131722]">
						<svg viewBox="0 0 20 20" className="size-7 fill-white" aria-hidden="true">
							<path d="M10 2q4.500 7 4.500 10.500a4.500 4.500 0 0 1-9 0Q5.500 9 10 2z" />
						</svg>
					</Badge>
				),
				symbol: 'USOIL', last: '59.7', tick: '8', change: '0.12', percent: '0.20%',
			},
			{ logo: <GoldLogo className="size-9" />, symbol: 'GOLD', last: '', tick: '', change: '', percent: '' },
		],
	},
];

const Watchlist = () => (
	<section aria-label="Watchlist" className="flex h-[938px] shrink-0 flex-col overflow-hidden rounded-t-xl bg-white">
		<div className="flex h-24 shrink-0 items-center pl-8">
			<h2 className="text-[28px] font-bold">Watch...</h2>
			<IconButton name="down" label="Lists" icon="size-8 [stroke-width:2]" className="mr-auto ml-2" />
			<IconButton name="plus" label="Add symbol" icon="size-12" className="w-[76px]" />
			<IconButton name="table" label="Advanced view" className="w-[76px]" />
			<IconButton name="dots" label="Settings" icon="size-[52px]" className="mr-[15px] w-[76px]" />
		</div>
		<table className="w-full table-fixed text-[26px]">
			<colgroup>
				<col className="w-[125px]" />
				<col className="w-[70px]" />
				<col className="w-[83px]" />
				<col className="w-[120px]" />
				<col />
			</colgroup>
			<thead>
				<tr className="h-14 border-b-2 border-[#ebebeb] text-[#707070]">
					<th className="text-left font-normal">
						<span className="flex items-center gap-2">
							<svg viewBox="0 0 24 26" className="h-[26px] w-6 fill-[#dbdbdb]" aria-hidden="true">
								<path d="M0 0h24l-6 13 6 13H0z" />
							</svg>
							Sym
						</span>
					</th>
					<th className="text-right font-normal">Last</th>
					<th className="text-right font-normal">Chg</th>
					<th className="text-right font-normal">Chg%</th>
					<th />
				</tr>
			</thead>
			{groups.map((group, i) => (
				<tbody key={group.title}>
					<tr className={i === 0 ? 'h-[85px]' : 'h-[72px]'}>
						<th colSpan={5} className={`pl-8 text-left text-[24px] font-normal text-[#707070] ${i === 0 ? 'pt-7' : 'pt-3.5'}`}>
							<span className="flex items-center gap-4">
								<Icon name="down" className="size-9 [stroke-width:1.6]" />
								{group.title}
							</span>
						</th>
					</tr>
					{group.rows.map((row) => {
						const tone = row.change.startsWith('−') ? 'text-[#f23645]' : 'text-[#22ab94]';
						return (
							<tr key={row.symbol} className="h-[60px] border-b-2 border-[#f2f2f2]">
								<td className="pl-8">
									<span className="flex items-center">
										{row.logo}
										{row.symbol && (
											<span className={`ml-3 overflow-hidden ${row.dot ? 'w-[9px]' : 'w-7'}`}>
												{row.symbol}
											</span>
										)}
										{row.delayed && <sup className="ml-5 text-[20px] font-medium text-[#ff9800]">D</sup>}
										{row.dot && <span className="ml-2 size-3 shrink-0 rounded-full bg-[#9c9c9c]" />}
									</span>
								</td>
								<td className="overflow-hidden whitespace-nowrap">
									{row.last}
									<span className={tone}>{row.tick}</span>
								</td>
								<td className={`text-right whitespace-nowrap ${tone}`}>{row.change}</td>
								<td className={`text-right whitespace-nowrap ${tone}`}>{row.percent}</td>
								<td />
							</tr>
						);
					})}
				</tbody>
			))}
		</table>
	</section>
);

const performance = [
	{ value: '2.53%', label: '1W', tone: 'bg-[#e6f5f2]' },
	{ value: '5.75%', label: '1M', tone: 'bg-[#d2ece7]' },
	{ value: '11.67%', label: '3M', tone: 'bg-[#bbe5dc]' },
	{ value: '34.26%', label: '6M', tone: 'bg-[#bbe5dc]' },
	{ value: '2.89%', label: 'YTD', tone: 'bg-[#e6f5f2]' },
	{ value: '68.63%', label: '1Y', tone: 'bg-[#bbe5dc]' },
];

const Details = () => (
	<section aria-label="Symbol details" className="min-h-0 flex-1 overflow-hidden bg-white pr-8 pl-8 text-[24px]">
		<div className="flex h-24 items-center">
			<GoldLogo className="mr-4 size-12" />
			<h2 className="mr-auto text-[28px] font-bold">XA...</h2>
			<IconButton name="grid" label="Details view" icon="size-[54px]" className="w-[76px]" />
			<IconButton name="edit" label="Note" className="w-[76px]" />
			<IconButton name="dots" label="More" icon="size-[52px]" className="-mr-4 w-[76px]" />
		</div>
		<p className="flex items-center gap-2 leading-[44px]">
			<a href="#gold">Gold Spot / U.S. Dollar</a>
			<Icon name="external" className="ml-1 size-9 text-[#707070]" />
			<span className="text-[#9c9c9c]">•</span>
		</p>
		<p className="leading-[44px]">OANDA</p>
		<p className="leading-[44px] text-[#9c9c9c]">Commodity • Cfd</p>
		<p className="mt-5 flex items-end leading-[70px]">
			<span className="text-[60px] font-bold">
				4,959.0<span className="text-[#cc2f3c]">3</span>
			</span>
			<span className="mb-1 text-[40px] font-bold text-[#cc2f3c]">5</span>
			<span className="ml-2 text-[24px] leading-[52px]">USD</span>
		</p>
		<p className="text-[32px] leading-[44px] font-bold whitespace-pre text-[#06806b]">+22.960  +0.47%</p>
		<p className="flex items-center gap-2.5 pl-2.5 text-[26px] leading-[44px] text-[#089981]">
			<span className="size-4 rounded-full bg-[#089981]" />
			Market open
		</p>
		<button type="button" className="mt-5 flex h-20 w-full items-center rounded-2xl bg-[#e8e1f3] pr-3 pl-5 text-left">
			<svg viewBox="0 0 20 20" className="mr-4 size-5 fill-[#673ab7]" aria-hidden="true">
				<path d="M14 0L3 11h6l-2 9L18 8h-6z" />
			</svg>
			<span className="flex-1 leading-8">
				32 minutes ago <span className="text-[#9c9c9c]">•</span>
				<br />
				Commodities intrada...
			</span>
			<Icon name="right" className="size-9 [stroke-width:1.8]" />
		</button>
		<h3 className="mt-12 text-[26px] leading-9 font-bold">Performance</h3>
		<div className="mt-3.5 grid grid-cols-3 gap-4">
			{performance.map((item) => (
				<div key={item.label} className={`flex h-20 flex-col items-center justify-center rounded-lg leading-8 ${item.tone}`}>
					<span className="font-bold text-[#089981]">{item.value}</span>
					<span>{item.label}</span>
				</div>
			))}
		</div>
		<h3 className="mt-12 text-[26px] leading-9 font-bold">Seasonals</h3>
		<svg viewBox="0 0 366 120" className="mt-3 block h-[120px] w-full" fill="none" aria-hidden="true">
			<path d="M37 4v118M129 4v118M221 4v118M312 4v118" stroke="#d6d6d6" strokeWidth="2" strokeDasharray="10 12" />
			<path
				d="M258 56l4-2 2-8 3 6 4-8 1 14M320 46l5-4 5 2 6-14 5-16 3-2 4 24 4 4"
				stroke="#00c853"
				strokeWidth="2"
			/>
		</svg>
	</section>
);

/* ---------- page ---------- */

const ranges = ['1D', '5D', '1M', '3M', '6M', 'YTD', '1Y', '5Y', 'All'];

const App = () => {
	return (
		<div className="flex h-screen flex-col overflow-hidden bg-[#ebebeb] font-['Roboto','Open_Sans',sans-serif] text-[#0f0f0f]">
			<TabBar />
			<Toolbar />
			<div className="flex min-h-0 flex-1 gap-2 pt-2">
				<DrawingBar />
				<main className="flex min-w-0 flex-1 flex-col gap-[7px]">
					<div className="overflow-hidden rounded-xl bg-white">
						<div className="relative">
							<Chart />
							<Legend />
						</div>
						<div className="flex h-[78px] items-center gap-[23px] border-t-2 border-[#ebebeb] px-7 text-[26px]">
							{ranges.map((range) => (
								<button key={range} type="button">
									{range}
								</button>
							))}
							<Rule />
							<IconButton name="goto" label="Go to date" icon="size-[54px]" />
							<button type="button" className="mr-[-6px] ml-auto text-[28px]">
								01:47:57 UTC
							</button>
						</div>
					</div>
					<div className="flex flex-1 items-center rounded-t-xl bg-[#f9f9f9] pr-0.5">
						<button type="button" className="h-full w-[200px] rounded-t-xl bg-white text-[28px]">
							Trading Panel
						</button>
						<IconButton name="up" label="Open panel" icon="size-[54px]" className="ml-auto w-[72px]" />
						<IconButton name="expand" label="Maximize panel" icon="size-[46px]" className="w-[72px]" />
					</div>
				</main>
				<div className="flex shrink-0">
					<aside className="relative flex w-[430px] flex-col gap-2">
						<Watchlist />
						<Details />
						<button
							type="button"
							aria-label="Hide panel"
							className="absolute bottom-[115px] -left-1 flex h-[54px] w-4 items-center justify-center rounded-md border-2 border-[#ebebeb] bg-white text-[#9c9c9c]"
						>
							<Icon name="right" className="size-5 [stroke-width:2]" />
						</button>
					</aside>
					<RightRail />
				</div>
			</div>
		</div>
	);
};

export default App;
